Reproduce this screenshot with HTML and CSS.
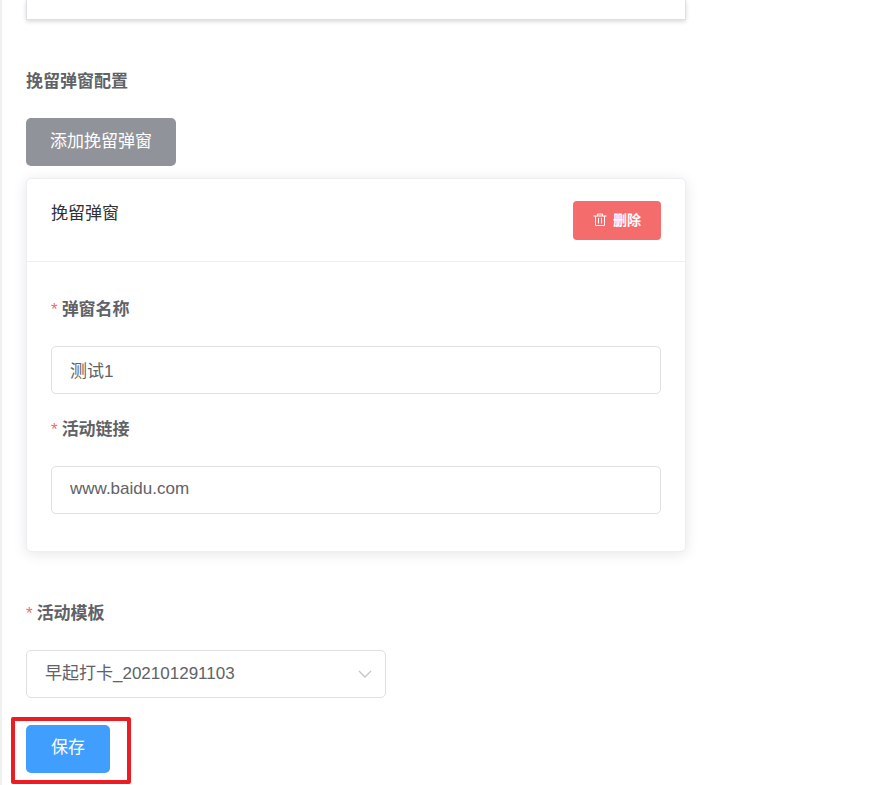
FILE: index.html
```html
<!DOCTYPE html>
<html lang="zh-CN">
<head>
<meta charset="utf-8">
<meta name="viewport" content="width=device-width, initial-scale=1">
<title>挽留弹窗配置</title>
<link rel="stylesheet" href="styles.css">
</head>
<body>
<main class="page">
  <form class="form">
    <div class="editor"></div>

    <section class="section">
      <h2 class="label">挽留弹窗配置</h2>
      <button class="button button-info" type="button">添加挽留弹窗</button>
      <div class="card">
        <div class="card-header">
          <span class="card-title">挽留弹窗</span>
          <button class="button button-danger" type="button">
            <svg class="icon" viewBox="0 0 14 14" aria-hidden="true"><path d="M.5 3h13M4.500 3V1h5v2M2.500 3v9.500h9V3M5.500 5v5.500M8.500 5v5.500"/></svg>
            <span>删除</span>
          </button>
        </div>
        <div class="card-body">
          <div class="field">
            <label class="label required" for="popup-name">弹窗名称</label>
            <input class="control" id="popup-name" type="text" value="测试1">
          </div>
          <div class="field">
            <label class="label required" for="popup-link">活动链接</label>
            <input class="control" id="popup-link" type="text" value="www.baidu.com">
          </div>
        </div>
      </div>
    </section>

    <section class="template">
      <label class="label required" for="template">活动模板</label>
      <div class="select">
        <select class="control" id="template">
          <option>早起打卡_202101291103</option>
        </select>
        <svg class="arrow" viewBox="0 0 14 8" aria-hidden="true"><path d="M1 1l6 6 6-6"/></svg>
      </div>
    </section>

    <div class="actions">
      <button class="button button-primary" type="button">保存</button>
    </div>
  </form>
</main>
</body>
</html>
```
FILE: styles.css
```css
* {
  box-sizing: border-box;
}

body {
  margin: 0;
  background: #fff;
  color: #606266;
  font-family: "Liberation Sans", "Noto Sans CJK SC", sans-serif;
  font-size: 17px;
}

.page {
  min-height: 100vh;
  padding: 0 24px;
  border-left: 2px solid #f0f0f0;
}

.form {
  display: flex;
  flex-direction: column;
  max-width: 660px;
}

.editor {
  height: 20px;
  border: 1px solid #dcdfe6;
  border-top: 0;
  box-shadow: 0 2px 4px rgba(0, 0, 0, 0.12), 0 0 6px rgba(0, 0, 0, 0.04);
}

.section {
  padding-top: 37px;
}

.label {
  display: block;
  margin: 0 0 11px;
  font-size: 17px;
  font-weight: 700;
  line-height: 50px;
}

.required::before {
  content: "*";
  margin-right: 4px;
  color: #f56c6c;
  font-weight: 400;
}

.button {
  display: inline-flex;
  align-items: center;
  justify-content: center;
  height: 48px;
  padding: 0 25px 2px;
  border: 0;
  border-radius: 5px;
  color: #fff;
  font: inherit;
  line-height: 24px;
  cursor: pointer;
}

.button-info {
  padding: 0 24px;
  background: #909399;
}

.button-primary {
  background: #409eff;
}

.button-danger {
  gap: 6px;
  height: 39px;
  padding: 0 20px 2px;
  border-radius: 4px;
  background: #f56c6c;
  font-size: 14px;
  font-weight: 700;
}

.icon {
  width: 14px;
  height: 14px;
  fill: none;
  stroke: #fff;
  stroke-width: 1;
}

.card {
  margin-top: 12px;
  border: 1px solid #ebeef5;
  border-radius: 5px;
  background: #fff;
  box-shadow: 0 2px 14px rgba(0, 0, 0, 0.1);
}

.card-header {
  display: flex;
  align-items: flex-start;
  justify-content: space-between;
  padding: 22px 24px 21px;
  border-bottom: 1px solid #ebeef5;
}

.card-title {
  color: #303133;
  line-height: 26px;
}

.card-body {
  display: grid;
  gap: 11px;
  padding: 23px 24px 37px;
}

.control {
  display: block;
  width: 100%;
  height: 48px;
  padding: 0 18px 2px;
  border: 1px solid #dcdfe6;
  border-radius: 5px;
  background: #fff;
  color: #606266;
  font: inherit;
  appearance: none;
}

.template {
  padding-top: 37px;
}

.select {
  position: relative;
  max-width: 360px;
}

.arrow {
  position: absolute;
  top: 20px;
  right: 14px;
  width: 14px;
  height: 8px;
  fill: none;
  stroke: #c0c4cc;
  stroke-width: 1.3;
  pointer-events: none;
}

.actions {
  position: relative;
  align-self: flex-start;
  margin-top: 27px;
}

/* Highlight frame around the save button */
.actions::after {
  content: "";
  position: absolute;
  inset: -8px -21px -11px -15px;
  border: 4px solid #ed1c24;
  border-radius: 2px;
  pointer-events: none;
}
```
